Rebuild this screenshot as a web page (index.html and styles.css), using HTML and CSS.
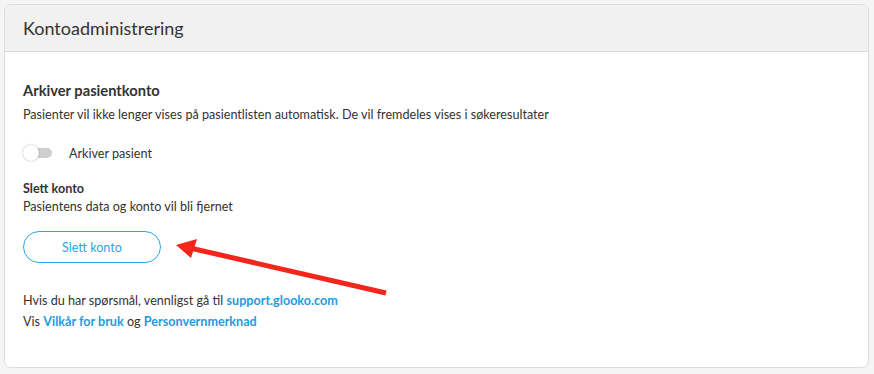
FILE: index.html
```html
<!DOCTYPE html>
<html lang="no">

<head>
  <meta charset="UTF-8">
  <title>Kontoadministrering</title>
  <link rel="stylesheet" href="styles.css">
</head>

<body>

  <section class="card">
    <header class="card-header">
      <h2>Kontoadministrering</h2>
    </header>

    <div class="card-body">
      <h3 class="section-title">Arkiver pasientkonto</h3>
      <p class="section-text">Pasienter vil ikke lenger vises på pasientlisten automatisk. De vil fremdeles vises i søkeresultater</p>

      <label class="toggle-row">
        <span class="toggle">
          <span class="toggle-track"></span>
          <span class="toggle-knob"></span>
        </span>
        <span class="toggle-label">Arkiver pasient</span>
      </label>

      <h4 class="sub-title">Slett konto</h4>
      <p class="sub-text">Pasientens data og konto vil bli fjernet</p>

      <button type="button" class="outline-btn">Slett konto</button>

      <div class="help">
        <p>Hvis du har spørsmål, vennligst gå til <a href="#">support.glooko.com</a></p>
        <p>Vis <a href="#">Vilkår for bruk</a> og <a href="#">Personvernmerknad</a></p>
      </div>
    </div>
  </section>

  <!-- annotation arrow -->
  <svg class="arrow" width="874" height="374" viewBox="0 0 874 374">
    <line x1="386" y1="293" x2="190" y2="248" stroke="#f4261c" stroke-width="5" />
    <polygon points="176,245 197,239 191,258" fill="#f4261c" />
  </svg>

</body>

</html>
```

FILE: styles.css
```css
body {
  margin: 0;
  font-family: Lato, "Open Sans", sans-serif;
  background: #f5f5f5;
  color: #333;
  position: relative;
}

/* Card */
.card {
  margin: 4px 5px 0 4px;
  height: 364px;
  box-sizing: border-box;
  background: #fff;
  border: 1px solid #dcdcdc;
  border-radius: 7px;
  overflow: hidden;
}

.card-header {
  height: 47px;
  box-sizing: border-box;
  background: #f1f1f1;
  border-bottom: 1px solid #d8d8d8;
  padding: 0 18px;
  display: flex;
  align-items: center;
}

.card-header h2 {
  margin: 0;
  font-size: 18px;
  font-weight: 400;
  color: #333;
}

.card-body {
  padding: 0 18px;
}

.section-title {
  margin: 28px 0 0;
  font-size: 14.7px;
  line-height: 20px;
  font-weight: 700;
}

.section-text,
.sub-text {
  margin: 0;
  font-size: 12.6px;
  line-height: 18px;
}

.section-text {
  margin-top: 6px;
}

/* Toggle */
.toggle-row {
  margin-top: 19px;
  height: 20px;
  display: flex;
  align-items: center;
  gap: 18px;
  font-size: 12.6px;
}

.toggle {
  position: relative;
  width: 28px;
  height: 20px;
}

.toggle-track {
  position: absolute;
  left: 7px;
  top: 5px;
  width: 22px;
  height: 10px;
  border-radius: 5px;
  background: #cfcfcf;
}

.toggle-knob {
  position: absolute;
  left: 0;
  top: 2px;
  width: 16px;
  height: 16px;
  border-radius: 50%;
  background: #fff;
  box-shadow: 0 0 2px rgba(0, 0, 0, 0.35);
}

.sub-title {
  margin: 17px 0 0;
  font-size: 12.6px;
  line-height: 18px;
  font-weight: 700;
}

.outline-btn {
  margin-top: 15px;
  width: 138px;
  height: 32px;
  border: 1px solid #2aa6e2;
  border-radius: 16px;
  background: #fff;
  color: #2aa6e2;
  font-family: inherit;
  font-size: 12.6px;
  cursor: pointer;
}

/* Help links */
.help {
  margin-top: 27px;
}

.help p {
  margin: 0;
  font-size: 12.6px;
  line-height: 21px;
}

.help a {
  color: #1e9be0;
  font-weight: 700;
  text-decoration: none;
}

.arrow {
  position: absolute;
  left: 0;
  top: 0;
  pointer-events: none;
}
```
